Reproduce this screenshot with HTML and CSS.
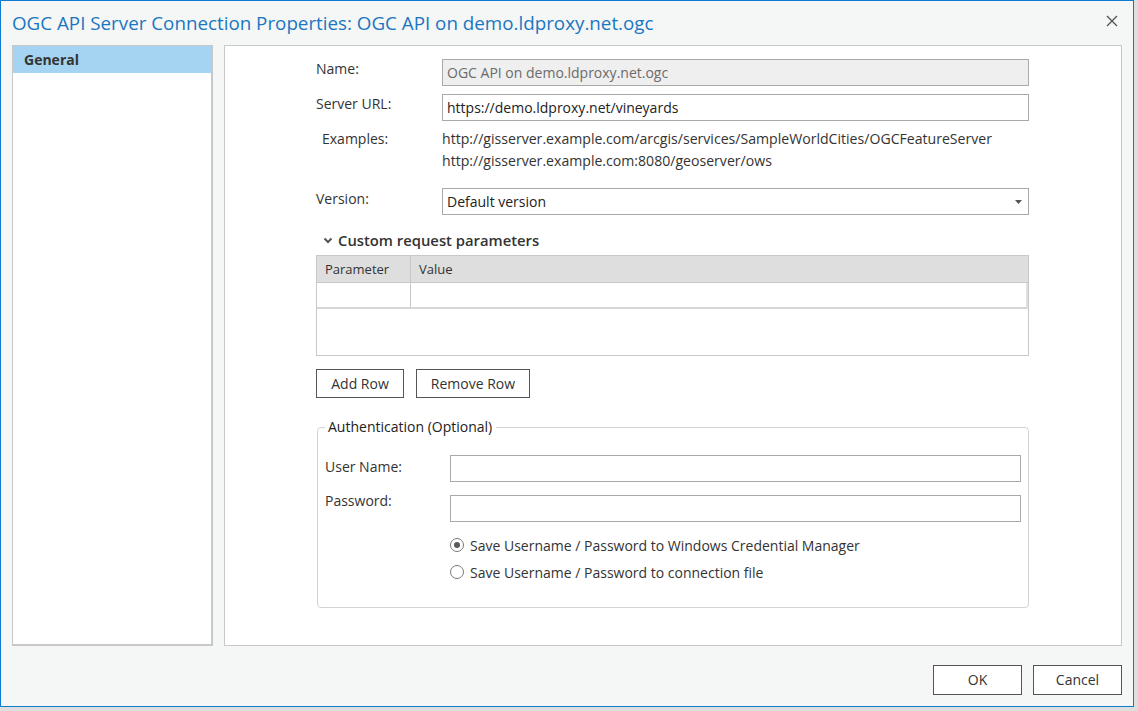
FILE: index.html
```html
<!DOCTYPE html>
<html>
<head>
<meta charset="utf-8">
<link rel="stylesheet" href="styles.css">
</head>
<body>
<div class="desktop">
  <div class="window">
    <div class="titlebar">
      <div class="title">OGC API Server Connection Properties: OGC API on demo.ldproxy.net.ogc</div>
      <svg class="close" width="12" height="12" viewBox="0 0 12 12"><path d="M1 1 L11 11 M11 1 L1 11" stroke="#555" stroke-width="1.4" fill="none"/></svg>
    </div>
    <div class="content">
      <div class="nav">
        <div class="nav-item active">General</div>
      </div>
      <div class="main">
        <div class="form">
          <div class="row row-name">
            <div class="label">Name:</div>
            <div class="input disabled">OGC API on demo.ldproxy.net.ogc</div>
          </div>
          <div class="row row-url">
            <div class="label">Server URL:</div>
            <div class="input">https://demo.ldproxy.net/vineyards</div>
          </div>
          <div class="row row-examples">
            <div class="label indent">Examples:</div>
            <div class="examples">
              <div>http://gisserver.example.com/arcgis/services/SampleWorldCities/OGCFeatureServer</div>
              <div>http://gisserver.example.com:8080/geoserver/ows</div>
            </div>
          </div>
          <div class="row row-version">
            <div class="label">Version:</div>
            <div class="input select">
              <span>Default version</span>
              <svg class="caret" width="7" height="4" viewBox="0 0 7 4"><path d="M0 0 H7 L3.5 4 Z" fill="#555"/></svg>
            </div>
          </div>
          <div class="section-head">
            <svg class="chev" width="10" height="7" viewBox="0 0 10 7"><path d="M1.5 1.5 L5 5 L8.5 1.5" stroke="#555" stroke-width="2" fill="none"/></svg>
            <span>Custom request parameters</span>
          </div>
          <div class="table">
            <div class="thead">
              <div class="th c1">Parameter</div>
              <div class="th c2">Value</div>
            </div>
            <div class="trow">
              <div class="td c1"></div>
              <div class="td c2"></div>
            </div>
          </div>
          <div class="btnrow">
            <div class="btn add">Add Row</div>
            <div class="btn remove">Remove Row</div>
          </div>
          <fieldset class="group">
            <legend>Authentication (Optional)</legend>
            <div class="grow g-user">
              <div class="glabel">User Name:</div>
              <div class="input ginput"></div>
            </div>
            <div class="grow g-pass">
              <div class="glabel">Password:</div>
              <div class="input ginput"></div>
            </div>
            <div class="radios">
              <div class="radio"><span class="dot checked"></span>Save Username / Password to Windows Credential Manager</div>
              <div class="radio"><span class="dot"></span>Save Username / Password to connection file</div>
            </div>
          </fieldset>
        </div>
      </div>
    </div>
    <div class="footer">
      <div class="btn fbtn">OK</div>
      <div class="btn fbtn">Cancel</div>
    </div>
  </div>
</div>
</body>
</html>
```
FILE: styles.css
```css
* { box-sizing: border-box; }
html, body { margin: 0; padding: 0; }
body {
  width: 1138px;
  height: 711px;
  overflow: hidden;
  background: #dedede;
  font-family: "Open Sans", "Noto Sans", sans-serif;
  font-size: 14px;
  color: #333;
}
.desktop { width: 1138px; height: 711px; }
.window {
  width: 1134px;
  height: 707px;
  border: 1px solid #0f7ad2;
  background: #f5f7f7;
  display: flex;
  flex-direction: column;
}
.titlebar {
  height: 44px;
  display: flex;
  align-items: flex-start;
  justify-content: space-between;
  padding: 9px 15px 0 11px;
}
.title {
  font-size: 18.8px;
  color: #1b76c0;
  line-height: 26px;
}
.close { margin-top: 5px; }
.content {
  display: flex;
  gap: 11px;
  padding: 0 11px;
  height: 601px;
}
.nav {
  width: 201px;
  height: 601px;
  background: #fff;
  border: 1px solid #c8c8c8;
  border-right-width: 2px;
  border-bottom-width: 2px;
}
.nav-item {
  height: 27px;
  line-height: 27px;
  padding-left: 11px;
  font-weight: 700;
  font-size: 14px;
  color: #333;
}
.nav-item.active { background: #a4d4f1; }
.main {
  width: 898px;
  height: 601px;
  background: #fff;
  border: 1px solid #c8c8c8;
  padding: 13px 0 0 91px;
}
.form { width: 713px; display: flex; flex-direction: column; }
.row { display: flex; }
.label { width: 126px; line-height: 20px; color: #333; }
.label.indent { padding-left: 6px; }
.input {
  width: 587px;
  height: 27px;
  border: 1px solid #a9a9a9;
  background: #fff;
  padding: 0 4px;
  line-height: 25px;
  color: #222;
}
.input.disabled { background: #efefef; color: #6b6b6b; }
.row-url { margin-top: 8px; }
.row-examples { margin-top: 7px; }
.row-examples .label { line-height: 22px; }
.examples { line-height: 22px; color: #333; font-size: 14.1px; }
.row-version { margin-top: 16px; }
.row-version .label { padding-top: 1px; }
.select { display: flex; align-items: center; justify-content: space-between; padding-right: 6px; }
.caret { margin-top: 1px; }
.section-head {
  margin-top: 14px;
  display: flex;
  align-items: center;
  gap: 5px;
  padding-left: 7px;
  font-size: 14.8px;
  font-weight: 600;
  height: 22px;
  color: #333;
}
.chev { margin-top: 1px; }
.table {
  margin-top: 4px;
  width: 713px;
  height: 101px;
  border: 1px solid #c8c8c8;
  background: #fff;
}
.thead { display: flex; height: 27px; background: #dedede; border-bottom: 1px solid #c8c8c8; }
.th { line-height: 26px; padding-left: 8px; font-size: 13px; color: #333; }
.c1 { width: 94px; border-right: 1px solid #c8c8c8; }
.c2 { flex: 1; }
.trow { display: flex; height: 26px; border-bottom: 2px solid #d6d6d6; border-right: 2px solid #e0e0e0; }
.btnrow { display: flex; gap: 12px; margin-top: 13px; }
.btn {
  height: 29px;
  border: 1px solid #555;
  background: #fff;
  line-height: 27px;
  text-align: center;
  color: #333;
}
.add { width: 88px; }
.remove { width: 114px; }
.group {
  margin: 20px 0 0 1px;
  width: 712px;
  height: 190px;
  border: 1px solid #d3d3d3;
  border-radius: 4px;
  padding: 19px 7px 0 7px;
  min-width: 0;
}
.group legend {
  padding: 0 4px 0 3px;
  margin-left: 0;
  font-size: 14px;
  color: #222;
  line-height: 18px;
}
.grow { display: flex; }
.glabel { width: 125px; line-height: 20px; color: #333; }
.g-user .glabel { padding-top: 2px; }
.g-pass .glabel { line-height: 12px; }
.ginput { width: 571px; }
.g-pass { margin-top: 13px; }
.radios { margin: 13px 0 0 125px; display: flex; flex-direction: column; gap: 7px; }
.radio { display: flex; align-items: center; gap: 6px; height: 20px; font-size: 14px; color: #333; }
.dot {
  width: 14px;
  height: 14px;
  border-radius: 50%;
  border: 1px solid #7a7a7a;
  background: #fff;
  display: flex;
  align-items: center;
  justify-content: center;
}
.dot.checked::after {
  content: "";
  width: 6px;
  height: 6px;
  border-radius: 50%;
  background: #5a5a5a;
}
.footer {
  display: flex;
  justify-content: flex-end;
  gap: 11px;
  padding: 19px 11px 0 0;
}
.fbtn { width: 89px; height: 30px; line-height: 28px; font-size: 14px; }
```
